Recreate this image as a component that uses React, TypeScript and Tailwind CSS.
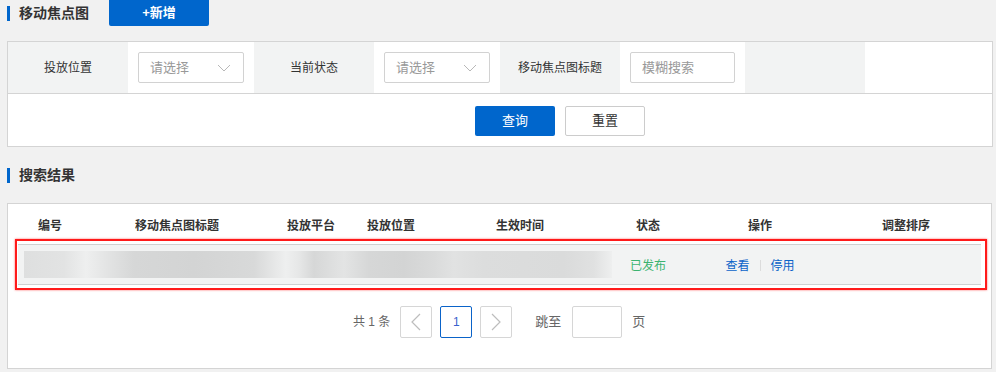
import React from "react";

const FONT = {
  fontFamily: '"Liberation Sans", "Noto Sans CJK SC", sans-serif',
};

function Chevron({ dir }: { dir: "down" | "left" | "right" }) {
  if (dir === "down")
    return (
      <svg width="14" height="8" viewBox="0 0 14 8" className="text-[#b8b8b8]">
        <polyline points="1,1 7,7 13,1" fill="none" stroke="currentColor" strokeWidth="1" />
      </svg>
    );
  return (
    <svg width="10" height="18" viewBox="0 0 10 18" className="text-[#bdbdbd]">
      <polyline
        points={dir === "left" ? "9,1 1,9 9,17" : "1,1 9,9 1,17"}
        fill="none"
        stroke="currentColor"
        strokeWidth="1.2"
      />
    </svg>
  );
}

function SelectBox() {
  return (
    <div className="w-[106px] h-[31px] border border-[#d2d2d2] rounded-[2px] bg-white flex items-center justify-between pl-[11px] pr-[12px]">
      <span className="text-[13px] text-[#999]">请选择</span>
      <Chevron dir="down" />
    </div>
  );
}

function SectionTitle({ text }: { text: string }) {
  return (
    <div className="flex items-center">
      <div className="w-[3px] h-[15px] bg-[#0066cc]" />
      <span className="ml-[9px] text-[14px] font-bold text-[#333]">{text}</span>
    </div>
  );
}

const cols = [
  "编号",
  "移动焦点图标题",
  "投放平台",
  "投放位置",
  "生效时间",
  "状态",
  "操作",
  "调整排序",
];

export default function App() {
  return (
    <div style={FONT} className="w-[996px] h-[372px] bg-[#f1f1f1] overflow-hidden text-[#333]">
      {/* page title */}
      <div className="h-[26px] flex items-center pl-[7px]">
        <div className="w-[102px]">
          <SectionTitle text="移动焦点图" />
        </div>
        <button className="w-[100px] h-[26px] bg-[#0066cc] text-white text-[13px] font-bold rounded-b-[2px]">
          +新增
        </button>
      </div>

      {/* filter panel */}
      <div className="mt-[15px] mx-[7px] w-[986px] border border-[#d4d4d4] bg-white">
        <div className="flex h-[52px] border-b border-[#d4d4d4]">
          <div className="w-[120px] bg-[#f2f3f3] flex items-center justify-center text-[12px]">投放位置</div>
          <div className="w-[126px] flex items-center pl-[10px]">
            <SelectBox />
          </div>
          <div className="w-[120px] bg-[#f2f3f3] flex items-center justify-center text-[12px]">当前状态</div>
          <div className="w-[126px] flex items-center pl-[10px]">
            <SelectBox />
          </div>
          <div className="w-[120px] bg-[#f2f3f3] flex items-center justify-center text-[12px]">移动焦点图标题</div>
          <div className="w-[125px] flex items-center pl-[10px]">
            <div className="w-[105px] h-[31px] border border-[#d2d2d2] rounded-[2px] flex items-center pl-[11px] text-[13px] text-[#999]">
              模糊搜索
            </div>
          </div>
          <div className="w-[120px] bg-[#f2f3f3]" />
          <div className="flex-1" />
        </div>
        <div className="h-[52px] flex items-center gap-[10px] pl-[467px] pt-[1px]">
          <button className="w-[80px] h-[30px] bg-[#0066cc] text-white text-[13px] rounded-[2px]">查询</button>
          <button className="w-[80px] h-[30px] bg-white border border-[#ccc] text-[#333] text-[13px] rounded-[2px]">
            重置
          </button>
        </div>
      </div>

      {/* results heading */}
      <div className="h-[26px] mt-[15px] flex items-center pl-[7px]">
        <SectionTitle text="搜索结果" />
      </div>

      {/* table panel */}
      <div className="mt-[15px] mx-[7px] w-[985px] h-[166px] border border-[#d4d4d4] bg-white">
        <div className="grid grid-cols-[84px_170px_98px_62px_196px_60px_164px_128px] h-[35px] pt-[8px] items-center text-[12px] font-bold text-[#333]">
          {cols.map((c) => (
            <div key={c} className="text-center">
              {c}
            </div>
          ))}
        </div>

        <div className="ml-[7px] w-[972px] h-[51px] border-2 border-[#ff1a1a] shadow-[0_0_2px_rgba(255,0,0,0.6)] pt-[3px] pl-[1px] pr-[4px]">
          <div className="h-[41px] bg-[#f2f3f3] border-y border-[#cfd1d1] flex items-center">
            <div
              className="ml-[6px] w-[588px] h-[27px]"
              style={{
                background:
                  "linear-gradient(90deg, #dedfdf 0px, #e2e3e3 40px, #eeefef 62px, #e2e3e3 85px, #d6d7d7 110px, #d3d4d4 170px, #d8d9d9 230px, #eeefef 262px, #e6e7e7 275px, #d6d7d7 290px, #e3e4e4 320px, #d6d7d7 345px, #d3d4d4 380px, #dadbdb 410px, #e1e2e2 430px, #dcdddd 460px, #dadbdb 540px, #e0e1e1 570px, #eeefef 588px)",
              }}
            />
            <div className="ml-[6px] w-[60px] text-center text-[12px] text-[#3cb371] pt-[2px]">已发布</div>
            <div className="w-[164px] flex items-center justify-center text-[12px] text-[#0a63c9] pt-[2px]">
              <span>查看</span>
              <span className="mx-[10px] w-px h-[11px] bg-[#dcdcdc]" />
              <span>停用</span>
            </div>
          </div>
        </div>

        <div className="mt-[16px] flex items-center pl-[345px] text-[12px] text-[#666]">
          <span className="mr-[10px]">共 1 条</span>
          <div className="w-[32px] h-[32px] border border-[#d6d6d6] rounded-[2px] flex items-center justify-center">
            <Chevron dir="left" />
          </div>
          <div className="ml-[8px] w-[32px] h-[32px] border border-[#0a63c9] rounded-[2px] flex items-center justify-center text-[#3a5fcd]">
            1
          </div>
          <div className="ml-[8px] w-[32px] h-[32px] border border-[#d6d6d6] rounded-[2px] flex items-center justify-center">
            <Chevron dir="right" />
          </div>
          <span className="ml-[23px] text-[13px]">跳至</span>
          <div className="ml-[11px] w-[50px] h-[32px] border border-[#d6d6d6] rounded-[2px] bg-white" />
          <span className="ml-[10px] text-[13px]">页</span>
        </div>
      </div>
    </div>
  );
}
